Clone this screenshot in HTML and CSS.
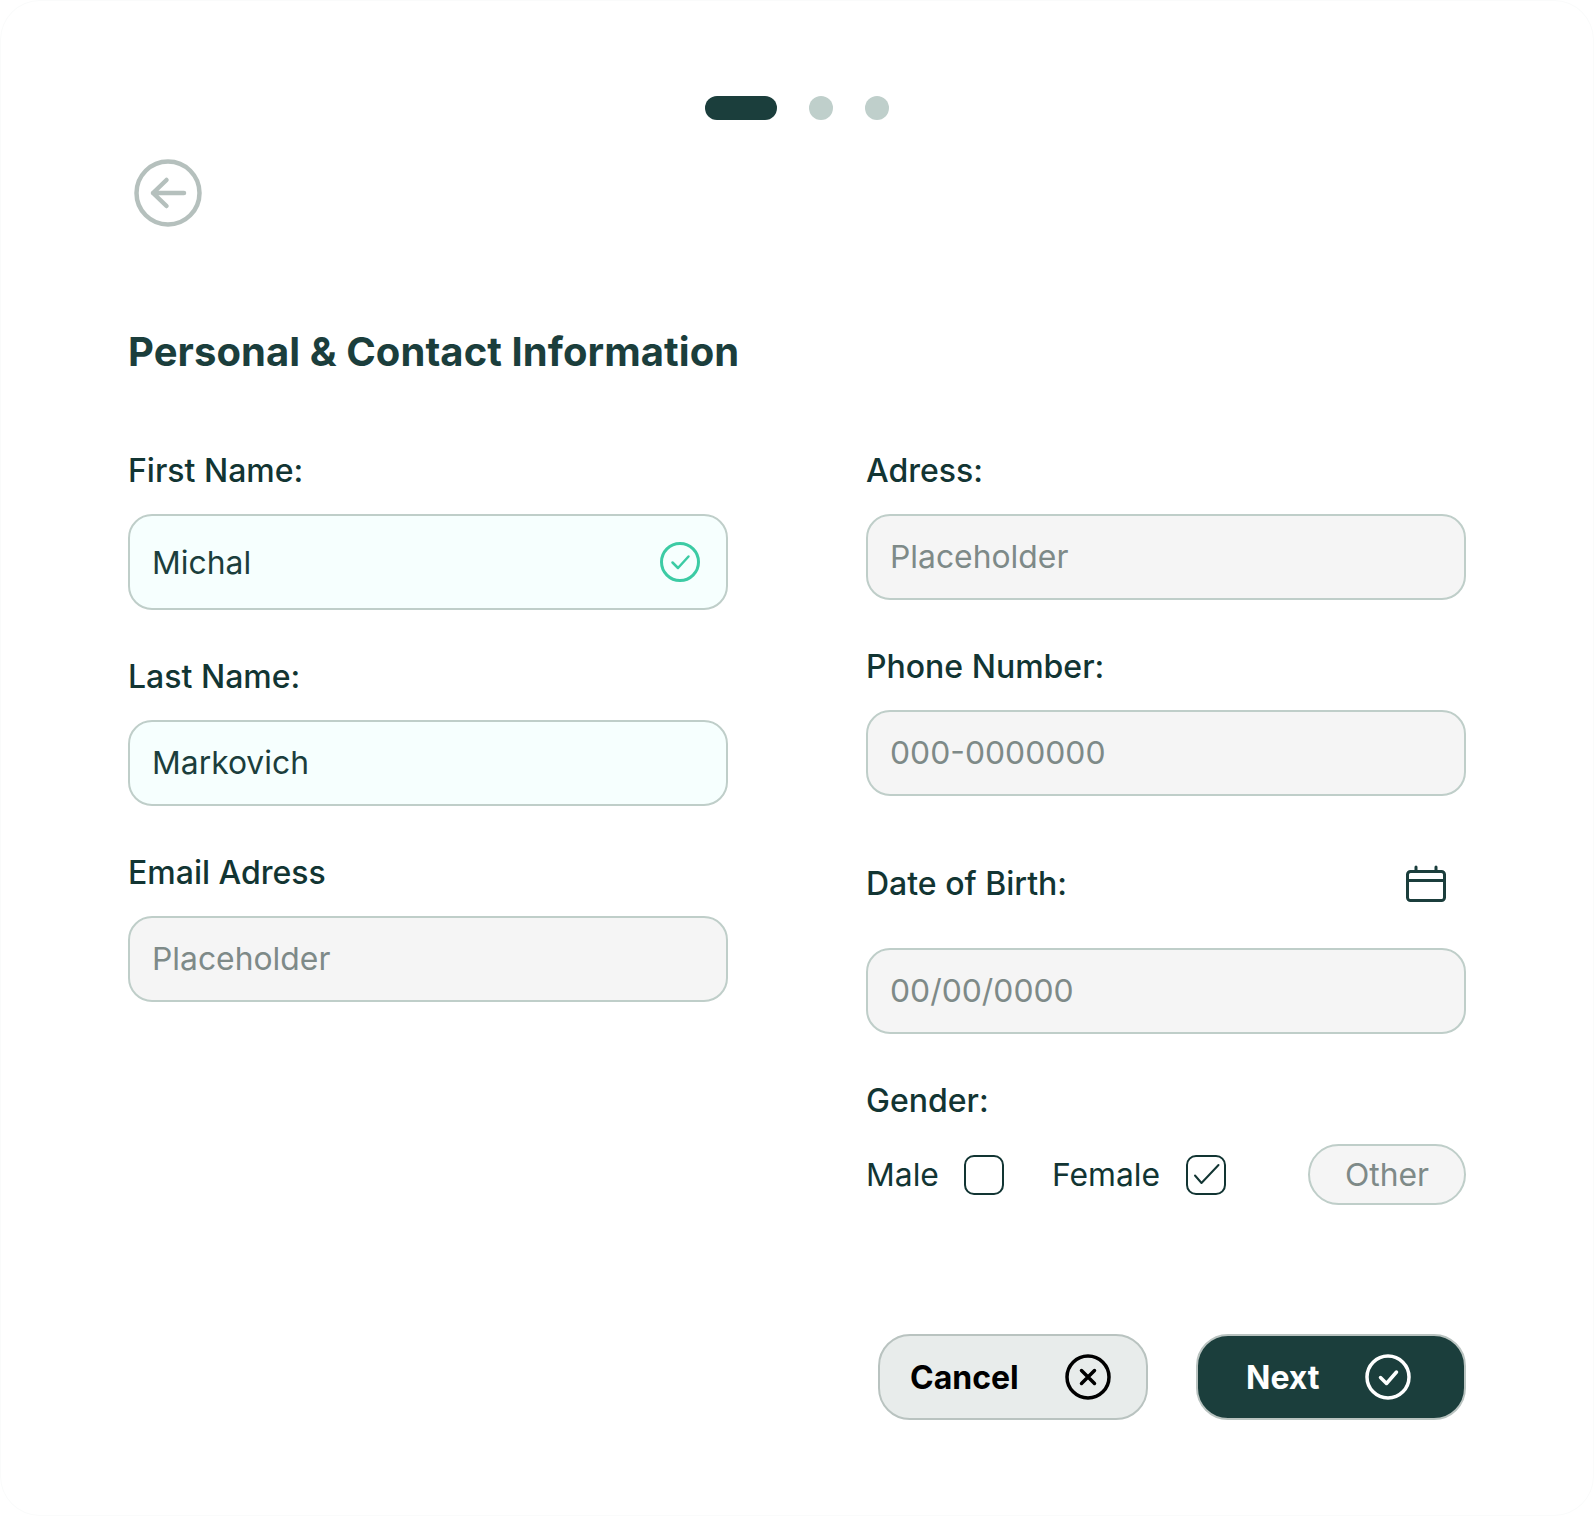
FILE: index.html
```html
<!DOCTYPE html>
<html lang="en">
<head>
<meta charset="utf-8">
<title>Personal &amp; Contact Information</title>
<link rel="stylesheet" href="styles.css">
</head>
<body>
<main class="card">
  <div class="steps">
    <span class="step-active"></span>
    <span class="step"></span>
    <span class="step"></span>
  </div>
  <button class="back" type="button" aria-label="Back">
    <svg width="68" height="68" viewBox="0 0 68 68" fill="none" stroke="#B5C0BD" stroke-width="4.500" stroke-linecap="round" stroke-linejoin="round"><circle cx="34" cy="34" r="31.500"/><path d="M50 34H19M32.500 21 19 34l13.500 13"/></svg>
  </button>
  <h1 class="title">Personal &amp; Contact Information</h1>
  <div class="columns">
    <section class="column">
      <label class="label">First Name:</label>
      <div class="input input-filled input-tall">
        <span>Michal</span>
        <svg width="40" height="40" viewBox="0 0 40 40" fill="none" stroke="#3CCBA4" stroke-linecap="round" stroke-linejoin="round"><circle cx="20" cy="20" r="18.500" stroke-width="3"/><path d="M12.500 20.500 18 26l10.500-11.500" stroke-width="2.500"/></svg>
      </div>
      <label class="label gap-a">Last Name:</label>
      <div class="input input-filled"><span>Markovich</span></div>
      <label class="label gap-a">Email Adress</label>
      <div class="input"><span class="placeholder">Placeholder</span></div>
    </section>
    <section class="column">
      <label class="label">Adress:</label>
      <div class="input"><span class="placeholder">Placeholder</span></div>
      <label class="label gap-a">Phone Number:</label>
      <div class="input"><span class="placeholder">000-0000000</span></div>
      <div class="label-row gap-b">
        <label class="label">Date of Birth:</label>
        <svg class="calendar" width="44" height="40" viewBox="0 0 44 40" fill="none" stroke="#1B3E3C" stroke-width="3" stroke-linecap="round" stroke-linejoin="round"><rect x="3.500" y="7.500" width="37" height="29" rx="3"/><path d="M3.500 16.500h37M12 3v4M32 3v4"/></svg>
      </div>
      <div class="input input-dob"><span class="placeholder">00/00/0000</span></div>
      <label class="label gap-a">Gender:</label>
      <div class="gender">
        <span class="option">Male</span>
        <span class="box"></span>
        <span class="option option-female">Female</span>
        <span class="box box-checked">
          <svg width="36" height="36" viewBox="0 0 36 36" fill="none" stroke="#123533" stroke-width="2" stroke-linecap="round" stroke-linejoin="round"><path d="M7 18.500 13.500 26 30.500 8"/></svg>
        </span>
        <span class="other">Other</span>
      </div>
    </section>
  </div>
  <div class="actions">
    <button class="btn btn-cancel" type="button">
      <span>Cancel</span>
      <svg width="46" height="46" viewBox="0 0 46 46" fill="none" stroke="#000" stroke-width="3.500" stroke-linecap="round" stroke-linejoin="round"><circle cx="23" cy="23" r="21"/><path d="m16.500 16.500 13 13M29.500 16.500l-13 13"/></svg>
    </button>
    <button class="btn btn-next" type="button">
      <span>Next</span>
      <svg width="46" height="46" viewBox="0 0 46 46" fill="none" stroke="#fff" stroke-width="3.500" stroke-linecap="round" stroke-linejoin="round"><circle cx="23" cy="23" r="21"/><path d="M15.500 23.500 21.500 29.500 31.500 18"/></svg>
    </button>
  </div>
</main>
</body>
</html>
```
FILE: styles.css
```css
* { box-sizing: border-box; }
html, body { margin: 0; background: #fff; }
body {
  font-family: Inter, "Liberation Sans", sans-serif;
  color: #123533;
}
.card {
  width: 1594px;
  height: 1516px;
  padding: 96px 128px 0;
  background: #fff;
  box-shadow: inset 0 0 0 1px #FAFBFB;
  border-radius: 40px;
  display: flex;
  flex-direction: column;
}
.steps {
  display: flex;
  justify-content: center;
  align-items: center;
  gap: 32px;
  height: 24px;
  margin-bottom: 39px;
}
.step-active {
  width: 72px;
  height: 24px;
  border-radius: 12px;
  background: #1B3E3C;
}
.step {
  width: 24px;
  height: 24px;
  border-radius: 50%;
  background: #BFCFCB;
}
.back {
  width: 68px;
  height: 68px;
  margin: 0 0 0 6px;
  padding: 0;
  border: 0;
  background: none;
  display: block;
}
.title {
  margin: 97px 0 0;
  height: 56px;
  font-size: 40px;
  line-height: 56px;
  font-weight: 700;
  letter-spacing: 0.07px;
  color: #1B3E3C;
}
.columns {
  display: grid;
  grid-template-columns: 600px 600px;
  column-gap: 138px;
  margin-top: 71px;
}
.column { display: flex; flex-direction: column; }
.label {
  display: block;
  font-size: 32px;
  line-height: 40px;
  font-weight: 500;
  color: #123533;
}
.gap-a { margin-top: 47px; }
.gap-b { margin-top: 68px; }
.label-row {
  display: flex;
  justify-content: space-between;
  align-items: center;
  padding-right: 18px;
}
.input {
  height: 86px;
  margin-top: 23px;
  padding: 0 22px 2px;
  display: flex;
  align-items: center;
  justify-content: space-between;
  background: #F5F5F5;
  border: 2px solid #BFCEC9;
  border-radius: 24px;
  font-size: 31.85px;
}
.input-tall { height: 96px; padding: 0 26px 0 22px; }
.input-filled { background: #F6FFFE; color: #1B3E3C; }
.input-dob { margin-top: 44px; }
.placeholder { color: #7E8A88; }
.gender {
  display: flex;
  align-items: center;
  height: 61px;
  margin-top: 23px;
  font-size: 31.85px;
}
.option { color: #123533; }
.option-female { margin-left: 48px; }
.box {
  width: 40px;
  height: 40px;
  margin-left: 25px;
  border: 2px solid #123533;
  border-radius: 10px;
  display: flex;
  align-items: center;
  justify-content: center;
}
.box-checked { margin-left: 26px; }
.other {
  margin-left: auto;
  width: 158px;
  height: 61px;
  display: flex;
  align-items: center;
  justify-content: center;
  background: #F5F5F5;
  border: 2px solid #BFCEC9;
  border-radius: 31px;
  color: #7E8A88;
}
.actions {
  display: flex;
  justify-content: flex-end;
  gap: 48px;
  margin-top: 129px;
}
.btn {
  width: 270px;
  height: 86px;
  padding: 0;
  display: flex;
  align-items: center;
  border: 2px solid #B9C3C0;
  border-radius: 32px;
  font-family: inherit;
  font-size: 32px;
  font-weight: 700;
}
.btn-cancel {
  background: #E8ECEB;
  color: #000;
  padding-left: 30px;
  gap: 46px;
}
.btn-next {
  background: #1B3E3C;
  color: #fff;
  padding-left: 48px;
  gap: 45px;
}
```
